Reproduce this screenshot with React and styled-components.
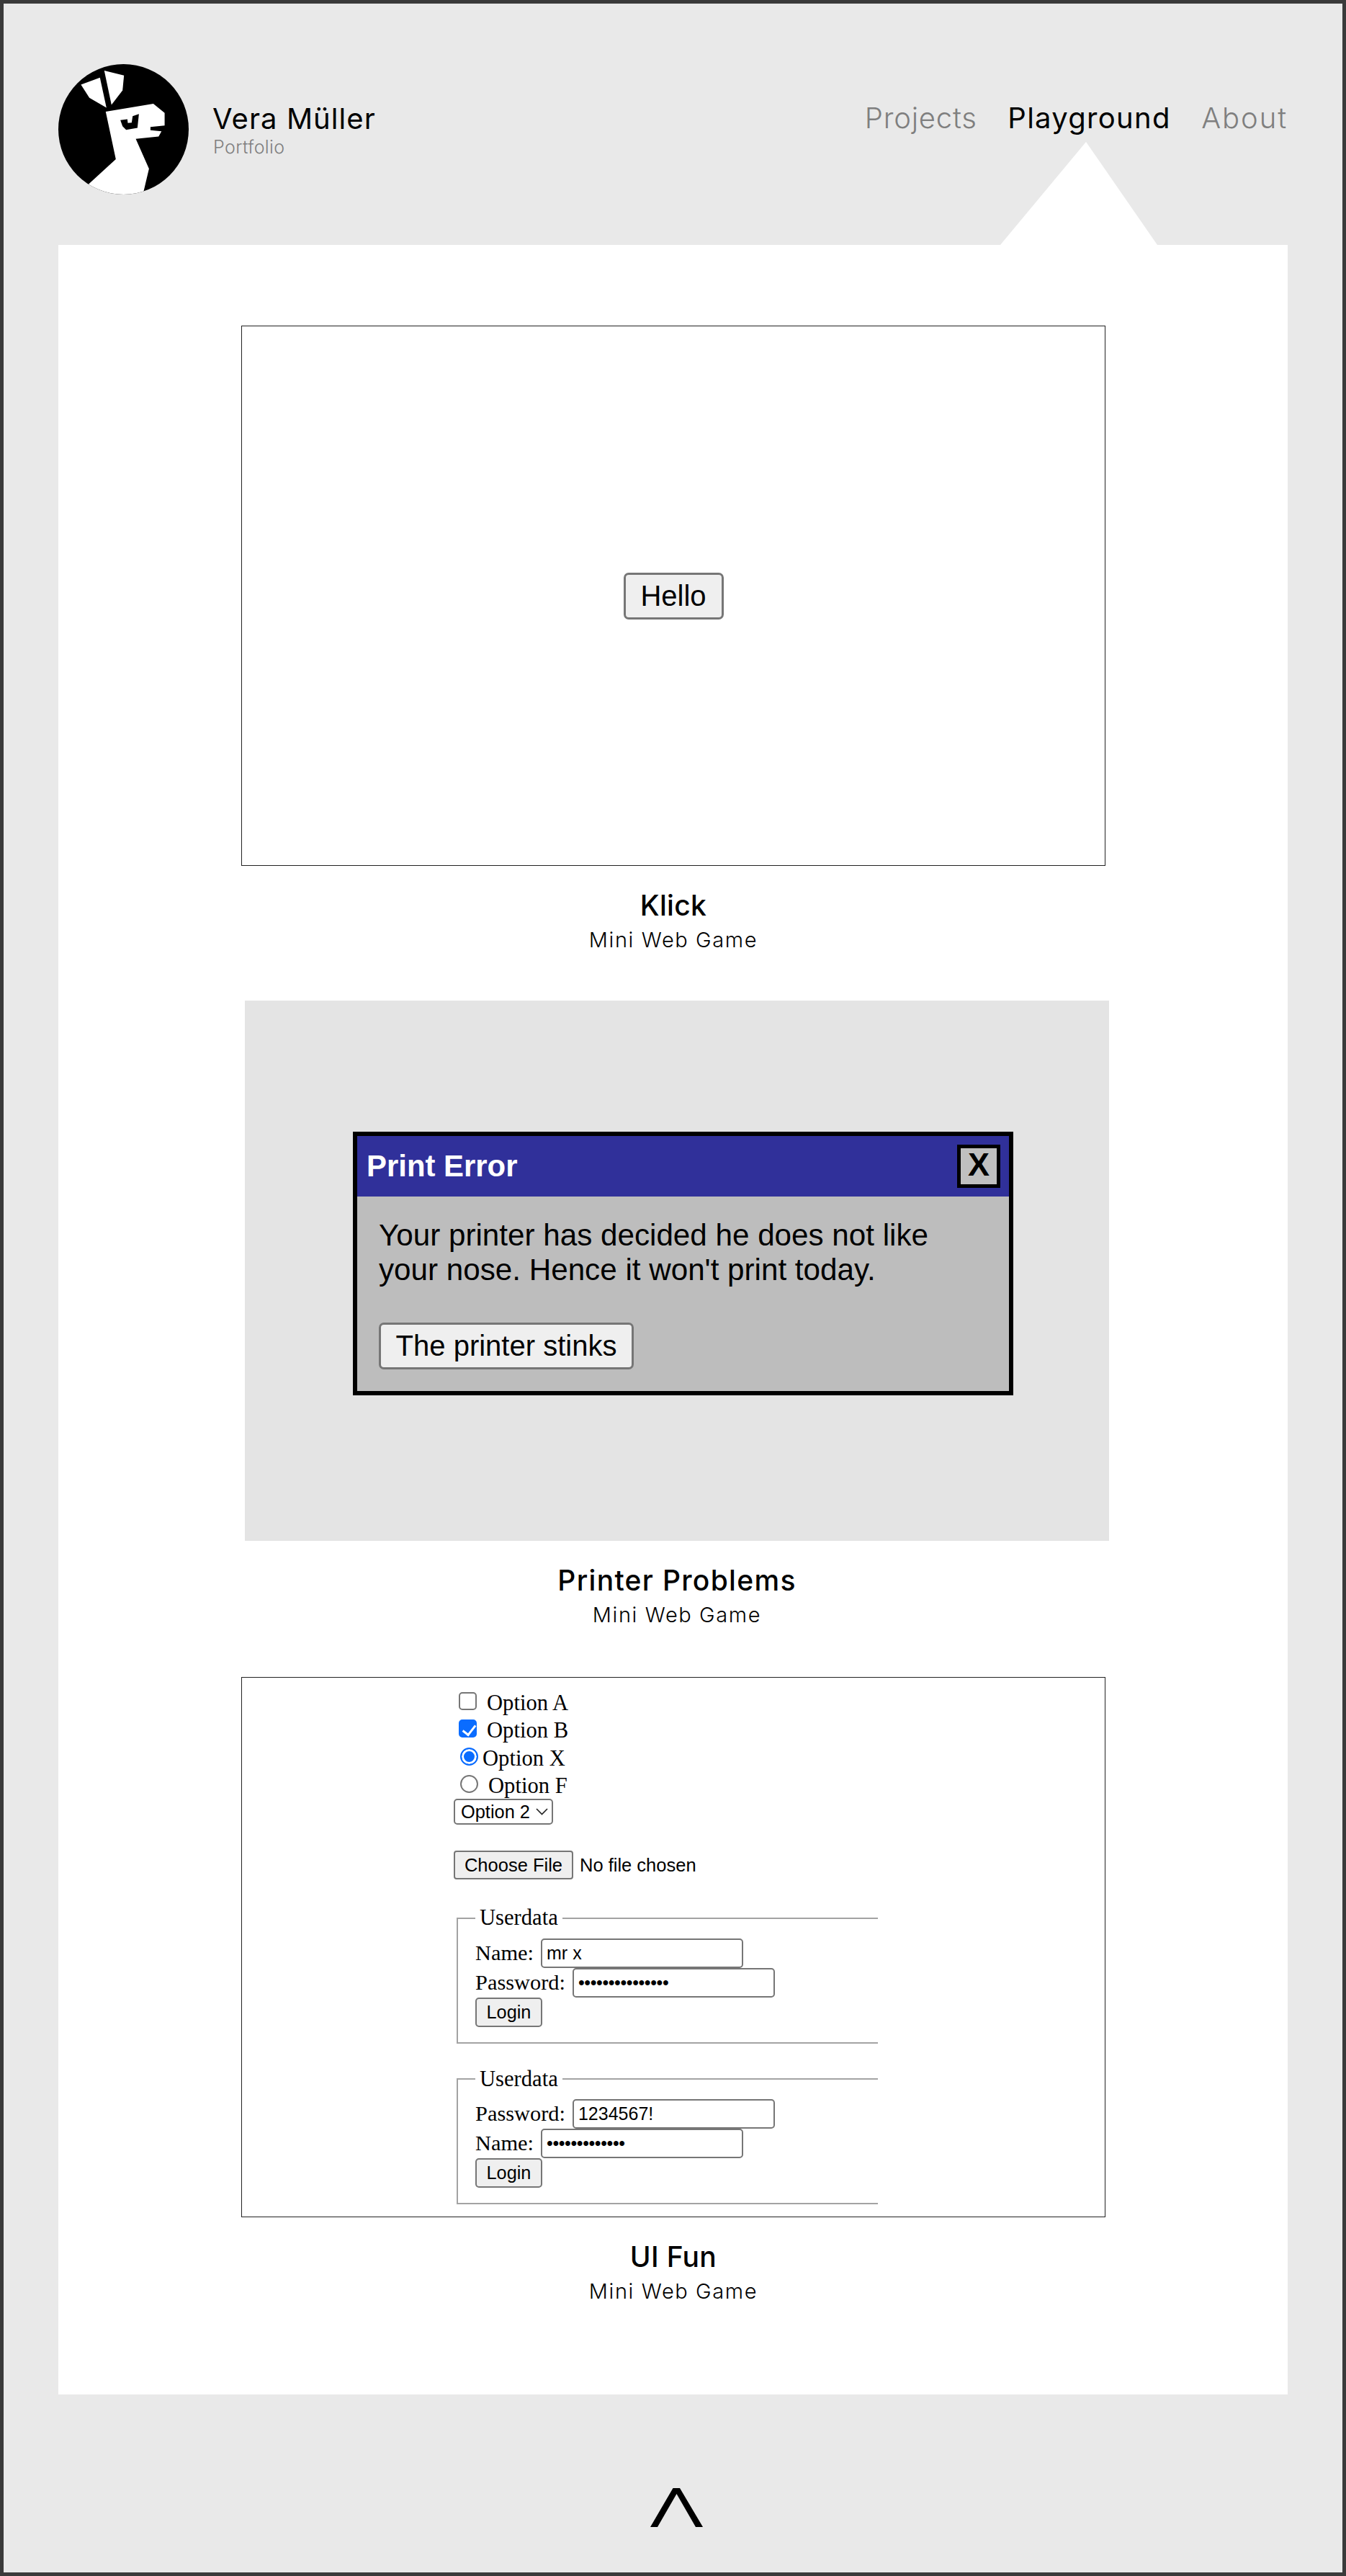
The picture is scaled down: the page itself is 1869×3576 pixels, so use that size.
import React from "react";
import styled, { createGlobalStyle } from "styled-components";

const Global = createGlobalStyle`
  html, body { margin: 0; padding: 0; background: #e9e9e9; }
  * { box-sizing: border-box; }
`;

const display = `"Inter", "Noto Sans", sans-serif`;
const arial = `"Liberation Sans", Arial, sans-serif`;
const times = `"Liberation Serif", "Times New Roman", serif`;

const Frame = styled.div`
  width: 1869px;
  height: 3576px;
  border: 5px solid #3a3a3a;
  background: #e9e9e9;
  padding: 0 76px;
  overflow: hidden;
`;
const Header = styled.header`
  height: 335px;
  padding-top: 84px;
  display: flex;
  justify-content: space-between;
  position: relative;
`;
const Brand = styled.div`
  display: flex;
  gap: 33px;
`;
const LogoBox = styled.svg`
  width: 181px;
  height: 181px;
  display: block;
`;
const BrandText = styled.div`
  padding-top: 48.5px;
  font-family: ${display};
`;
const BrandName = styled.div`
  font-size: 40px;
  line-height: 54px;
  font-weight: 400;
  letter-spacing: 1.05px;
  color: #000;
`;
const BrandSub = styled.div`
  font-size: 25px;
  line-height: 28px;
  margin: -1.5px 0 0 1px;
  font-weight: 300;
  letter-spacing: 0.4px;
  color: #7f7f7f;
`;
const Nav = styled.nav`
  display: flex;
  gap: 42.5px;
  padding-top: 47.5px;
  font-family: ${display};
`;
const NavItem = styled.a`
  font-size: 40px;
  line-height: 54px;
  font-weight: ${(p) => (p.$active ? 400 : 300)};
  letter-spacing: ${(p) => p.$spacing}px;
  color: ${(p) => (p.$active ? "#000" : "#7f7f7f")};
`;
const Pointer = styled.div`
  position: absolute;
  right: 181px;
  bottom: 0;
  width: 218px;
  height: 143px;
  background: #fff;
  clip-path: polygon(0 100%, 119px 0, 100% 100%);
`;
const Main = styled.main`
  height: 2984px;
  background: #fff;
  padding: 112px 0 0 254px;
`;
const Project = styled.section`
  width: 1200px;
  height: ${(p) => p.$height}px;
  margin-left: ${(p) => p.$shift || 0}px;
`;
const Stage = styled.div`
  width: 1200px;
  height: 750px;
  border: 1px solid #222;
  display: flex;
  align-items: center;
  justify-content: center;
`;
const FormStage = styled.div`
  width: 1200px;
  height: 750px;
  border: 1px solid #222;
`;
const Caption = styled.div`
  text-align: center;
  font-family: ${display};
  padding-top: 28px;
`;
const Title = styled.h2`
  margin: 0;
  font-size: 39px;
  line-height: 54px;
  font-weight: 500;
  letter-spacing: ${(p) => p.$spacing}px;
  color: #000;
`;
const Subtitle = styled.p`
  margin: 0;
  font-size: 29px;
  line-height: 42px;
  font-weight: 300;
  letter-spacing: 1.6px;
  color: #000;
`;
const NativeButton = styled.button`
  font-family: ${arial};
  font-size: 40px;
  color: #000;
  background: #efefef;
  border: 3px solid #767676;
  border-radius: 7px;
  padding: 0;
  width: ${(p) => p.$w}px;
  height: 65px;
`;
const PrinterStage = styled.div`
  width: 1200px;
  height: 750px;
  background: #e4e4e4;
  padding: 182px 0 0 150px;
`;
const Dialog = styled.div`
  width: 917px;
  height: 366px;
  border: 6px solid #000;
  background: #bdbdbd;
  font-family: ${arial};
`;
const DialogBar = styled.div`
  height: 84px;
  background: #30309a;
  display: flex;
  align-items: center;
  justify-content: space-between;
  padding: 0 12px 0 13px;
`;
const DialogTitle = styled.span`
  font-size: 41.9px;
  font-weight: 700;
  color: #fff;
`;
const CloseButton = styled.div`
  width: 60px;
  height: 60px;
  border: 5px solid #000;
  background: #c0c0c0;
  color: #000;
  font-size: 45px;
  font-weight: 700;
  display: flex;
  align-items: center;
  justify-content: center;
  padding-bottom: 4px;
`;
const DialogBody = styled.div`
  padding: 30px 0 0 30px;
`;
const DialogText = styled.p`
  margin: 0 0 49px;
  font-size: 42.2px;
  line-height: 48px;
  color: #000;
  width: 840px;
`;
const FormClip = styled.div`
  width: 589px;
  height: 748px;
  margin-left: 294px;
  padding-top: 16px;
  overflow: hidden;
  font-family: ${times};
  font-size: 30.6px;
  color: #000;
`;
const OptionRow = styled.label`
  display: flex;
  align-items: baseline;
  height: 38.33px;
  line-height: 38.33px;
  padding-left: ${(p) => p.$inset}px;
`;
const OptionCheck = styled.input`
  appearance: none;
  position: relative;
  flex: none;
  width: 25px;
  height: 25px;
  margin: 0 ${(p) => p.$gap}px 0 0;
  background: #fff;
  border: 2px solid #767676;
  border-radius: ${(p) => (p.type === "radio" ? "50%" : "5px")};
  &:checked {
    border-color: #0a6cff;
    background: #0a6cff;
    ${(p) => (p.type === "radio" ? "box-shadow: inset 0 0 0 3px #fff;" : "")}
  }
  ${(p) =>
    p.type === "checkbox"
      ? `&:checked::after {
          content: "";
          position: absolute;
          left: 6.5px;
          top: 1.5px;
          width: 8px;
          height: 15px;
          border: solid #fff;
          border-width: 0 3.5px 3.5px 0;
          transform: rotate(38deg);
        }`
      : ""}
`;
const SelectWrap = styled.div`
  position: relative;
  width: 138px;
  height: 36px;
  margin-top: -1px;
`;
const Select = styled.select`
  appearance: none;
  width: 138px;
  height: 36px;
  border: 2px solid #767676;
  border-radius: 5px;
  background: #fff;
  color: #000;
  font-family: ${arial};
  font-size: 25.4px;
  padding: 0 0 0 8px;
`;
const Caret = styled.svg`
  position: absolute;
  left: 114px;
  top: 13px;
  width: 17px;
  height: 10px;
  pointer-events: none;
`;
const FileInput = styled.input`
  display: block;
  margin-top: 36px;
  width: 400px;
  height: 40px;
  font-family: ${arial};
  font-size: 25.5px;
  color: #000;
  &::file-selector-button {
    width: 166px;
    height: 40px;
    margin-right: 9px;
    padding: 0;
    font-family: ${arial};
    font-size: 25.5px;
    color: #000;
    background: #efefef;
    border: 2px solid #767676;
    border-radius: 4px;
  }
`;
const Fieldset = styled.fieldset`
  width: 720px;
  min-width: 0;
  margin: ${(p) => p.$top}px 0 0 4px;
  border: 2.5px solid #a3a3a3;
  padding: 10.5px 0 21px 24px;
  font-size: 30.4px;
`;
const Legend = styled.legend`
  padding: 0 6px;
  font-size: 30.6px;
`;
const FieldRow = styled.div`
  display: flex;
  align-items: center;
  gap: 10px;
  height: 41px;
`;
const TextInput = styled.input`
  width: 281px;
  height: 41px;
  border: 2px solid #767676;
  border-radius: 5px;
  padding: 0 6px;
  font-family: ${arial};
  font-size: 25px;
  color: #000;
  background: #fff;
  letter-spacing: ${(p) => (p.type === "password" ? "-0.4px" : "0")};
`;
const LoginButton = styled.button`
  width: 93px;
  height: 41px;
  padding: 0;
  font-family: ${arial};
  font-size: 25.3px;
  color: #000;
  background: #efefef;
  border: 2px solid #767676;
  border-radius: 5px;
`;
const Footer = styled.footer`
  padding-top: 130px;
  padding-left: 822px;
`;
const Chevron = styled.svg`
  display: block;
  width: 73px;
  height: 54px;
`;

const Logo = () => (
  <LogoBox viewBox="63 57 542 542" aria-label="Vera Müller logo">
    <defs>
      <clipPath id="disc">
        <circle cx="334" cy="328" r="271" />
      </clipPath>
    </defs>
    <circle cx="334" cy="328" r="271" fill="#000" />
    <g clipPath="url(#disc)" fill="#fff">
      <polygon points="157,142 236,113 263,238 192,197" />
      <polygon points="254,84 336,104 330,166 284,226" />
      <polygon points="260,255 458,222 505,260 505,312 446,318 446,332 492,336 480,358 385,368 440,492 412,610 170,610 190,555 302,452" />
    </g>
    <polygon
      points="321,290 350,286 352,302 368,300 372,273 398,264 392,322 345,330 330,315"
      fill="#000"
    />
  </LogoBox>
);

const LoginFields = ({ rows }) => (
  <>
    <Legend>Userdata</Legend>
    {rows.map((r) => (
      <FieldRow key={r.label}>
        {r.label}:
        <TextInput type={r.type} defaultValue={r.value} />
      </FieldRow>
    ))}
    <FieldRow>
      <LoginButton type="button">Login</LoginButton>
    </FieldRow>
  </>
);

export default function App() {
  return (
    <>
      <Global />
      <Frame>
        <Header>
          <Brand>
            <Logo />
            <BrandText>
              <BrandName>Vera Müller</BrandName>
              <BrandSub>Portfolio</BrandSub>
            </BrandText>
          </Brand>
          <Nav>
            <NavItem $spacing={0.8}>Projects</NavItem>
            <NavItem $active $spacing={1.3}>Playground</NavItem>
            <NavItem $spacing={1.9}>About</NavItem>
          </Nav>
          <Pointer />
        </Header>
        <Main>
          <Project $height={937}>
            <Stage>
              <NativeButton type="button" $w={139}>Hello</NativeButton>
            </Stage>
            <Caption>
              <Title $spacing={0.3}>Klick</Title>
              <Subtitle>Mini Web Game</Subtitle>
            </Caption>
          </Project>
          <Project $height={939} $shift={5}>
            <PrinterStage>
              <Dialog>
                <DialogBar>
                  <DialogTitle>Print Error</DialogTitle>
                  <CloseButton>X</CloseButton>
                </DialogBar>
                <DialogBody>
                  <DialogText>
                    Your printer has decided he does not like your nose. Hence it won't print today.
                  </DialogText>
                  <NativeButton type="button" $w={354}>The printer stinks</NativeButton>
                </DialogBody>
              </Dialog>
            </PrinterStage>
            <Caption>
              <Title $spacing={1.3}>Printer Problems</Title>
              <Subtitle>Mini Web Game</Subtitle>
            </Caption>
          </Project>
          <Project $height={939}>
            <FormStage>
              <FormClip>
                <OptionRow $inset={7}>
                  <OptionCheck type="checkbox" $gap={14} />
                  Option A
                </OptionRow>
                <OptionRow $inset={7}>
                  <OptionCheck type="checkbox" defaultChecked $gap={14} />
                  Option B
                </OptionRow>
                <OptionRow $inset={9}>
                  <OptionCheck type="radio" name="a" defaultChecked $gap={6} />
                  Option X
                </OptionRow>
                <OptionRow $inset={9}>
                  <OptionCheck type="radio" name="b" $gap={14} />
                  Option F
                </OptionRow>
                <SelectWrap>
                  <Select defaultValue="Option 2">
                    <option>Option 1</option>
                    <option>Option 2</option>
                  </Select>
                  <Caret viewBox="0 0 17 10">
                    <path d="M1 1 L8.5 8.5 L16 1" fill="none" stroke="#222" strokeWidth="1.6" />
                  </Caret>
                </SelectWrap>
                <FileInput type="file" />
                <Fieldset $top={36}>
                  <LoginFields
                    rows={[
                      { label: "Name", type: "text", value: "mr x" },
                      { label: "Password", type: "password", value: "123456789012345" },
                    ]}
                  />
                </Fieldset>
                <Fieldset $top={32}>
                  <LoginFields
                    rows={[
                      { label: "Password", type: "text", value: "1234567!" },
                      { label: "Name", type: "password", value: "1234567890123" },
                    ]}
                  />
                </Fieldset>
              </FormClip>
            </FormStage>
            <Caption>
              <Title $spacing={0.3}>UI Fun</Title>
              <Subtitle>Mini Web Game</Subtitle>
            </Caption>
          </Project>
        </Main>
        <Footer>
          <Chevron viewBox="0 0 73 54" aria-label="Back to top">
            <polygon points="0,54 31.5,0 41,0 73,54 63,54 36.5,8 10,54" fill="#000" />
          </Chevron>
        </Footer>
      </Frame>
    </>
  );
}
